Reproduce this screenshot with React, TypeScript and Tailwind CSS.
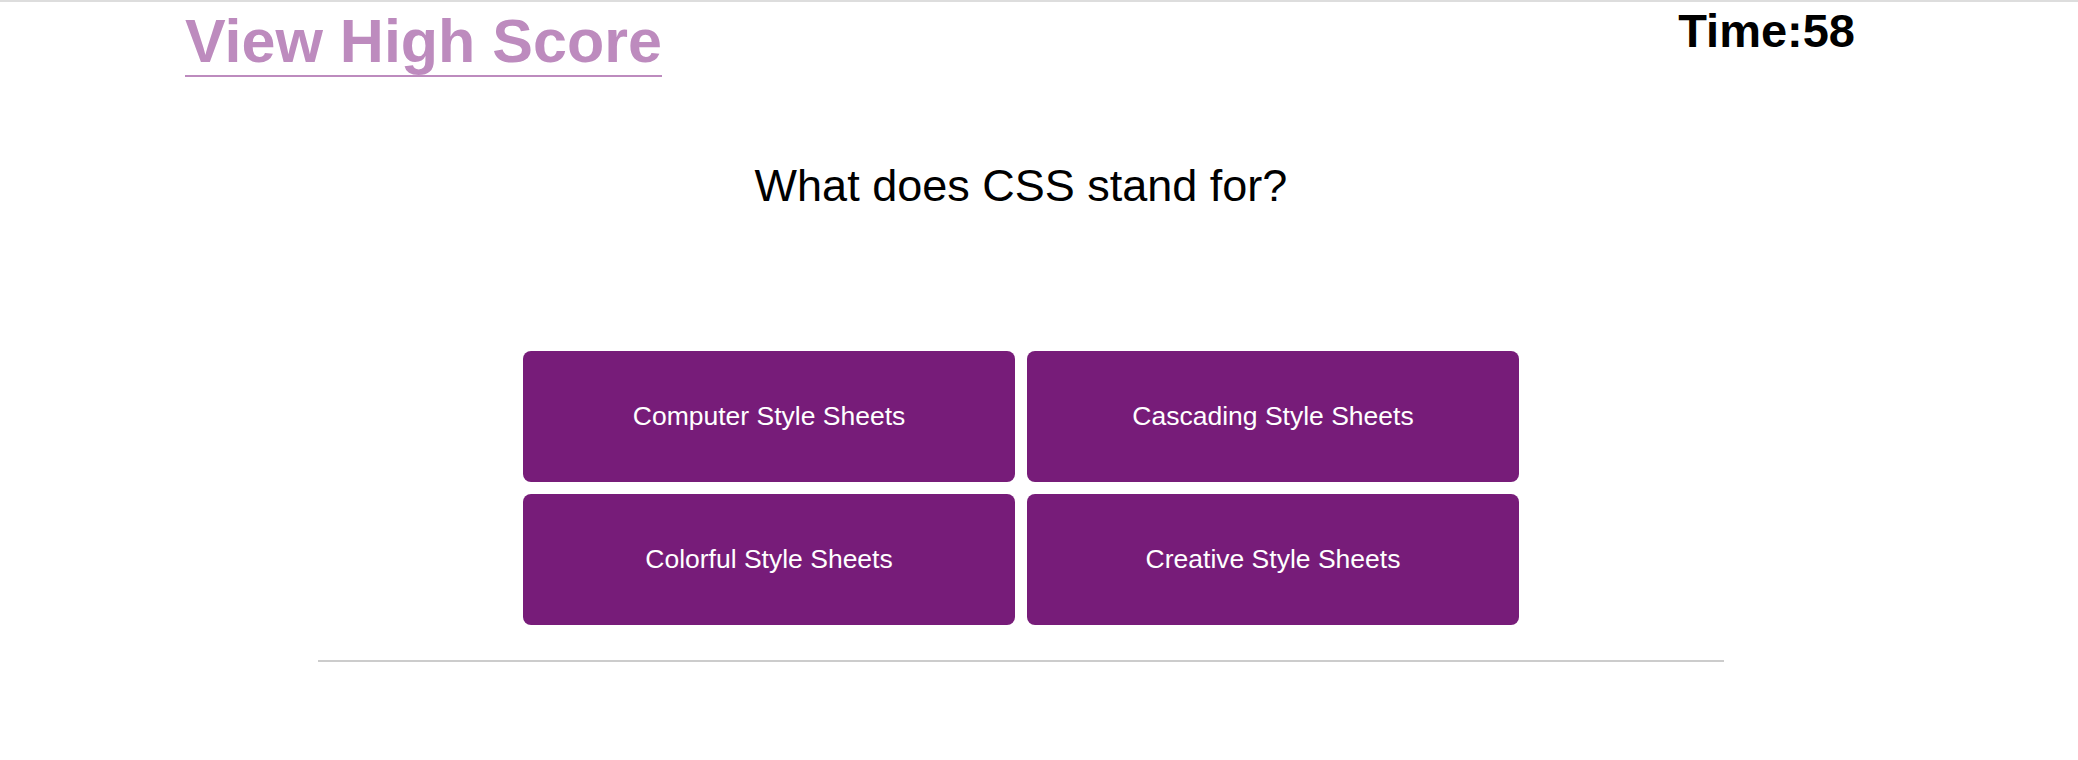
const answers = [
  'Computer Style Sheets',
  'Cascading Style Sheets',
  'Colorful Style Sheets',
  'Creative Style Sheets',
]

export default function App() {
  return (
    <div className="min-h-[760px] w-[2078px] bg-white border-t-2 border-[#dddddd] font-['Liberation_Sans',Arial,sans-serif]">
      <div className="w-[2042px]">
        {/* Header */}
        <header className="flex items-start justify-between px-[185px]">
          <a
            href="#"
            className="mt-[5px] block leading-[68px] text-[61px] font-bold text-[#bd8bbe] border-b-2 border-[#bd8bbe]"
          >
            View High Score
          </a>
          <div className="mt-[5px] mr-[2px] leading-none text-[47px] font-bold text-black">Time:58</div>
        </header>

        {/* Question */}
        <main className="flex flex-col items-center">
          <h2 className="mt-[86px] leading-none text-[45px] text-black">What does CSS stand for?</h2>

          <div className="mt-[143px] grid grid-cols-[492px_492px] auto-rows-[131px] gap-[12px]">
            {answers.map((a) => (
              <button
                key={a}
                className="flex items-center justify-center rounded-[8px] bg-[#771c79] text-white text-[26.5px] leading-none"
              >
                {a}
              </button>
            ))}
          </div>

          <hr className="mt-[35px] w-[1406px] border-0 border-t-2 border-[#cccccc]" />
        </main>
      </div>
    </div>
  )
}
